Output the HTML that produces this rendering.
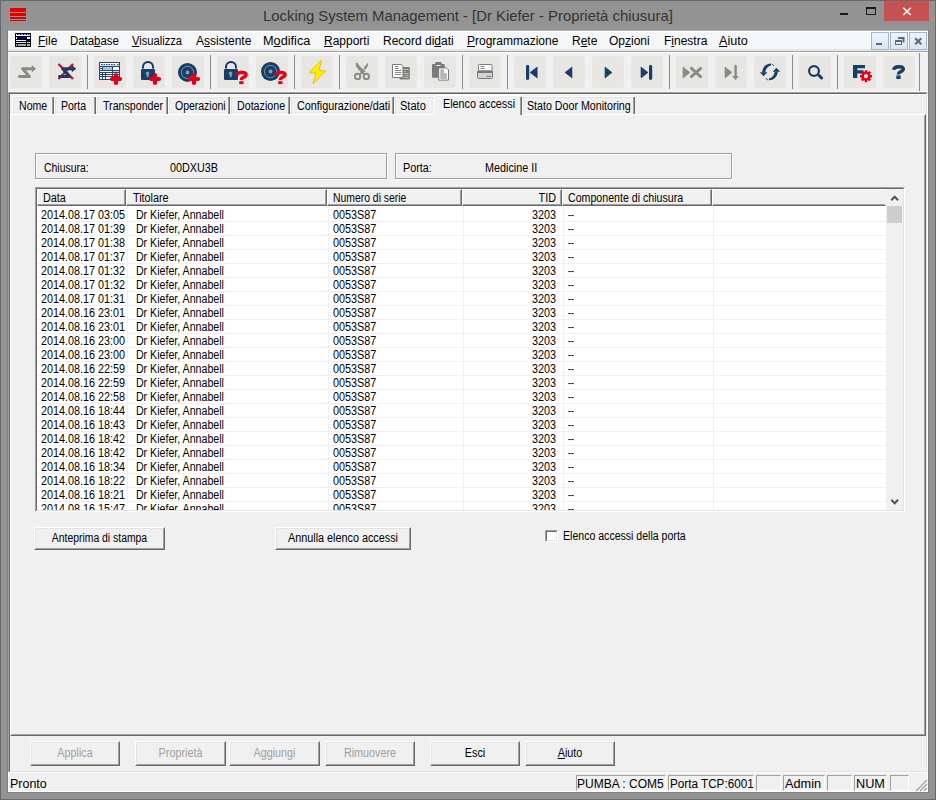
<!DOCTYPE html><html><head><meta charset="utf-8"><style>
*{box-sizing:border-box}
html,body{margin:0;padding:0;width:936px;height:800px;overflow:hidden;background:#939393;font-family:"Liberation Sans",sans-serif;}
.a{position:absolute}
.t{position:absolute;white-space:nowrap;font-size:12px;line-height:13px;color:#000;transform-origin:0 0;transform:scaleX(0.9)}
.btn{position:absolute;background:#f0f0f0;border-style:solid;border-width:1px;border-color:#fff #696969 #696969 #fff;}
.btn>i{position:absolute;left:0;top:0;right:0;bottom:0;border-style:solid;border-width:1px;border-color:#e3e3e3 #a0a0a0 #a0a0a0 #e3e3e3;}
.tb{position:absolute;top:56px;width:32px;height:32px;background:#e8e6e2;border-radius:3px}
.tb svg{position:absolute;left:0;top:0}
.sep{position:absolute;top:55px;width:1px;height:34px;background:#8a8a8a}
.menu{position:absolute;top:34px;font-size:12px;line-height:15px;color:#000;white-space:nowrap;transform-origin:0 0}
.menu u{text-decoration:underline;text-underline-offset:1px;text-decoration-thickness:1px}
.tab{position:absolute;top:96px;height:18px;background:#f0f0f0;border-left:1px solid #fff;border-top:1px solid #fff;box-shadow:inset 1px 1px 0 #e3e3e3}
.tab .rd{position:absolute;right:0;top:0;bottom:0;width:2px;border-left:1px solid #a0a0a0;border-right:1px solid #696969}
.grp{position:absolute;border:1px solid #a0a0a0;box-shadow:1px 1px 0 #fff, inset 1px 1px 0 #fff}
.row{position:absolute;left:0;width:849px;height:14px;}
.sp{position:absolute;top:775px;height:16px;border-style:solid;border-width:1px;border-color:#a0a0a0 #fff #fff #a0a0a0;}
.st{position:absolute;top:777px;font-size:12px;line-height:14px;color:#000;white-space:nowrap;transform-origin:0 0}
</style></head><body>
<div class="a" style="left:0;top:0;width:936px;height:800px;border:1px solid #6a6a6a"></div>
<div class="a" style="left:7px;top:30px;width:922px;height:763px;border:1px solid #818181"></div>
<div class="a" style="left:10px;top:8px;width:16px;height:4px;background:#e00000"></div>
<div class="a" style="left:10px;top:13px;width:16px;height:3px;background:#e00000"></div>
<div class="a" style="left:10px;top:17px;width:16px;height:2px;background:#e00000"></div>
<div class="a" style="left:10px;top:20px;width:16px;height:1px;background:#e00000"></div>
<div class="a" style="left:263px;top:7px;transform:scaleX(0.991);font-size:15px;line-height:18px;color:#333;white-space:nowrap;transform-origin:0 0;">Locking System Management - [Dr Kiefer - Proprietà chiusura]</div>
<div class="a" style="left:840px;top:13px;width:8px;height:2px;background:#1a1a1a"></div>
<div class="a" style="left:866px;top:7px;width:10px;height:8px;border:1px solid #1a1a1a;border-top-width:2px"></div>
<div class="a" style="left:884px;top:1px;width:45px;height:20px;background:#c75050"></div>
<svg class="a" style="left:884px;top:1px" width="45" height="20"><path d="M19.3 6.8 L26.7 14 M26.7 6.8 L19.3 14" stroke="#fff" stroke-width="1.6"/></svg>
<div class="a" style="left:8px;top:30px;width:920px;height:762px;background:#f0f0f0"></div>
<div class="a" style="left:8px;top:30px;width:920px;height:1px;background:#b8b8b8"></div>
<div class="a" style="left:8px;top:31px;width:920px;height:18px;background:#f5f6f7"></div>
<div class="a" style="left:8px;top:31px;width:920px;height:1px;background:#fff"></div>
<div class="a" style="left:8px;top:49px;width:920px;height:2px;background:#e6e6e6"></div>
<div class="a" style="left:8px;top:51px;width:920px;height:1px;background:#a0a0a0"></div>
<div class="a" style="left:8px;top:52px;width:920px;height:1px;background:#fff"></div>
<svg class="a" style="left:15px;top:33px" width="16" height="14"><rect x="0" y="0" width="16" height="14" rx="0.6" fill="#000"/><rect x="1" y="1" width="14" height="2" fill="#fff"/><rect x="2" y="1" width="1.6" height="1" fill="#0000e8"/><rect x="4.7" y="1" width="1.8" height="1" fill="#0000e8"/><rect x="7.6" y="1" width="1.8" height="1" fill="#0000e8"/><rect x="10.5" y="1" width="1.8" height="1" fill="#0000e8"/><rect x="13.2" y="1" width="1.2" height="1" fill="#0000e8"/><rect x="1" y="4" width="1" height="2" fill="#fff"/><rect x="3" y="4" width="8" height="2" fill="#00008a"/><rect x="12" y="4" width="3" height="2" fill="#f4f4f4"/><rect x="1" y="7" width="10" height="1" fill="#eee"/><rect x="12" y="7" width="3" height="1" fill="#00008a"/><rect x="1" y="9" width="10" height="1" fill="#e4e4e4"/><rect x="12" y="9" width="3" height="1" fill="#ddd"/><rect x="1" y="11" width="1" height="2" fill="#b8b8b8"/><rect x="3" y="11" width="8" height="2" fill="#a8a8a8"/><rect x="12" y="11" width="3" height="2" fill="#b0b0b0"/></svg>
<div class="menu" style="left:38px;top:34px;"><u>F</u>ile</div>
<div class="menu" style="left:70px;top:34px;transform:scaleX(0.95);">Data<u>b</u>ase</div>
<div class="menu" style="left:132px;top:34px;transform:scaleX(0.93);"><u>V</u>isualizza</div>
<div class="menu" style="left:196px;top:34px;">A<u>s</u>sistente</div>
<div class="menu" style="left:263px;top:34px;transform:scaleX(1.06);">M<u>o</u>difica</div>
<div class="menu" style="left:324px;top:34px;"><u>R</u>apporti</div>
<div class="menu" style="left:383px;top:34px;">Record di<u>d</u>ati</div>
<div class="menu" style="left:467px;top:34px;"><u>P</u>rogrammazione</div>
<div class="menu" style="left:572px;top:34px;">R<u>e</u>te</div>
<div class="menu" style="left:609px;top:34px;">Op<u>z</u>ioni</div>
<div class="menu" style="left:664px;top:34px;">F<u>i</u>nestra</div>
<div class="menu" style="left:719px;top:34px;transform:scaleX(1.05);"><u>A</u>iuto</div>
<div class="a" style="left:871px;top:32px;width:18px;height:18px;background:linear-gradient(#eef4fb,#dae6f3);border:1px solid #a3b5c8"></div>
<div class="a" style="left:890px;top:32px;width:18px;height:18px;background:linear-gradient(#eef4fb,#dae6f3);border:1px solid #a3b5c8"></div>
<div class="a" style="left:909px;top:32px;width:18px;height:18px;background:linear-gradient(#eef4fb,#dae6f3);border:1px solid #a3b5c8"></div>
<div class="a" style="left:876px;top:43px;width:6px;height:2px;background:#5b6b7b"></div>
<svg class="a" style="left:890px;top:32px" width="18" height="18"><path d="M8 6h5.5v4.5" fill="none" stroke="#5b6b7b" stroke-width="2"/><rect x="5.5" y="8.5" width="6" height="4" fill="none" stroke="#5b6b7b" stroke-width="1"/><path d="M5 9h7" stroke="#5b6b7b" stroke-width="2"/></svg>
<svg class="a" style="left:909px;top:32px" width="18" height="18"><path d="M6.2 6.2 L12.3 12.3 M12.3 6.2 L6.2 12.3" stroke="#5b6b7b" stroke-width="2"/></svg>
<div class="a" style="left:919px;top:53px;width:1px;height:39px;background:#8e8e8e"></div>
<div class="tb" style="left:10px"><svg width="32" height="32"><path d="M12.5 12.8H22.5M12.8 12.8L19.2 20.5M9.5 20.5H19.5" fill="none" stroke="#8a8a8a" stroke-width="2.9" stroke-linecap="round" stroke-linejoin="round"/><path d="M21.8 9L26.2 12.8L21.8 16.2Z" fill="#8a8a8a"/></svg></div>
<div class="tb" style="left:49px"><svg width="32" height="32"><path d="M9.5 8L24 23M24 8L9.5 23" stroke="#e8001c" stroke-width="2.3"/><path d="M13.5 12.8H23.5M13.8 12.8L20.2 20.5M10.5 20.5H20.5" fill="none" stroke="#183e68" stroke-width="2.9" stroke-linecap="round" stroke-linejoin="round"/><path d="M22.8 9L27.2 12.8L22.8 16.2Z" fill="#183e68"/></svg></div>
<div class="tb" style="left:94px"><svg width="32" height="32"><rect x="5" y="6" width="21" height="18" fill="#1e4a7a"/><rect x="6" y="7" width="19" height="2.8" fill="#fff"/><rect x="7" y="8" width="1.6" height="1" fill="#1e4a7a"/><rect x="9.5" y="8" width="1.6" height="1" fill="#1e4a7a"/><rect x="12" y="8" width="1.6" height="1" fill="#1e4a7a"/><rect x="14.5" y="8" width="1.6" height="1" fill="#1e4a7a"/><rect x="17" y="8" width="1.6" height="1" fill="#1e4a7a"/><rect x="19.5" y="8" width="1.6" height="1" fill="#1e4a7a"/><rect x="23" y="8" width="1.6" height="1" fill="#1e4a7a"/><rect x="6" y="11" width="2" height="1" fill="#fff"/><rect x="6" y="13" width="2" height="1" fill="#fff"/><rect x="9" y="11" width="9" height="3" fill="#b4c0d0"/><rect x="19" y="11" width="6" height="3" fill="#fff"/><rect x="6" y="15" width="12" height="1" fill="#fff"/><rect x="19" y="15" width="6" height="1" fill="#c8d0dc"/><rect x="6" y="17" width="2" height="1" fill="#fff"/><rect x="9" y="17" width="2" height="1" fill="#fff"/><rect x="12" y="17" width="6" height="1" fill="#fff"/><rect x="19" y="17" width="6" height="1" fill="#fff"/><rect x="6" y="19" width="2" height="1" fill="#fff"/><rect x="9" y="19" width="2" height="1" fill="#fff"/><rect x="12" y="19" width="6" height="1" fill="#fff"/><rect x="19" y="19" width="6" height="1" fill="#fff"/><rect x="6" y="21" width="2" height="2" fill="#fff"/><rect x="9" y="21" width="2" height="2" fill="#fff"/><rect x="12" y="21" width="6" height="2" fill="#fff"/><path d="M18 23H26M22 19V27" stroke="#e2001a" stroke-width="4.2" stroke-linecap="round"/></svg></div>
<div class="tb" style="left:133px"><svg width="32" height="32"><path d="M10 12.5V11A5 5 0 0 1 20 11V12.5" fill="none" stroke="#14365e" stroke-width="2"/><rect x="8" y="13" width="14" height="11" rx="1" fill="#183e68"/><circle cx="14.6" cy="17.3" r="1.7" fill="#8d9db3"/><rect x="13.7" y="17.5" width="1.9" height="3.6" fill="#8d9db3"/><path d="M18 23H26M22 19V27" stroke="#e2001a" stroke-width="4.2" stroke-linecap="round"/></svg></div>
<div class="tb" style="left:172px"><svg width="32" height="32"><circle cx="15.5" cy="16.4" r="9.5" fill="#183e68"/><circle cx="15.5" cy="16.4" r="6.1" fill="none" stroke="#8b9db5" stroke-width="0.9"/><circle cx="15.5" cy="16.4" r="1.9" fill="#8e9cb0"/><path d="M18 23H26M22 19V27" stroke="#e2001a" stroke-width="4.2" stroke-linecap="round"/></svg></div>
<div class="tb" style="left:217px"><svg width="32" height="32"><path d="M9 12.5V11A5 5 0 0 1 19 11V12.5" fill="none" stroke="#14365e" stroke-width="2"/><rect x="7" y="13" width="14" height="11" rx="1" fill="#183e68"/><circle cx="13.6" cy="17.3" r="1.7" fill="#8d9db3"/><rect x="12.7" y="17.5" width="1.9" height="3.6" fill="#8d9db3"/><path d="M19.9 19.6C20 17.2 22.3 16.5 25 16.5C27.8 16.5 29.1 17.3 29.1 18.8C29.1 20.5 27 21 25.7 21.7C24.6 22.3 24.3 23 24.3 24" fill="none" stroke="#e2001a" stroke-width="3.4"/><rect x="22.2" y="25.2" width="4.3" height="2.9" fill="#e2001a"/></svg></div>
<div class="tb" style="left:256px"><svg width="32" height="32"><circle cx="14.5" cy="15.5" r="9.5" fill="#183e68"/><circle cx="14.5" cy="15.5" r="6.1" fill="none" stroke="#8b9db5" stroke-width="0.9"/><circle cx="14.5" cy="15.5" r="1.9" fill="#8e9cb0"/><path d="M19.9 19.6C20 17.2 22.3 16.5 25 16.5C27.8 16.5 29.1 17.3 29.1 18.8C29.1 20.5 27 21 25.7 21.7C24.6 22.3 24.3 23 24.3 24" fill="none" stroke="#e2001a" stroke-width="3.4"/><rect x="22.2" y="25.2" width="4.3" height="2.9" fill="#e2001a"/></svg></div>
<div class="tb" style="left:301px"><svg width="32" height="32"><path d="M20.6 4L8.2 16.6L15 17.2L12 27.6L24.6 15.2L18 14.2Z" fill="#ffee00" stroke="#f3b400" stroke-width="0.9" stroke-linejoin="round"/></svg></div>
<div class="tb" style="left:346px"><svg width="32" height="32"><path d="M9.6 7.6L11.2 6.6L13.8 10.2L19.6 15.4L16 17.8L10 10.5Z" fill="#8a8a8a"/><path d="M21.8 6.8L22 9.5L19.8 13.2L17.4 13.8L18.2 11Z" fill="#8a8a8a"/><circle cx="11.6" cy="20.4" r="2.7" fill="none" stroke="#8a8a8a" stroke-width="1.9"/><circle cx="20.4" cy="20.4" r="2.7" fill="none" stroke="#8a8a8a" stroke-width="1.9"/><path d="M14 18L16 16.5L18 18" fill="none" stroke="#8a8a8a" stroke-width="1.8"/></svg></div>
<div class="tb" style="left:385px"><svg width="32" height="32"><rect x="14.5" y="11" width="10.3" height="12.6" rx="0.8" fill="#7c7c7c"/><path d="M18.5 13.5h5M18.5 15.5h2M18.5 17.5h5M18.5 19.5h1M20.5 19.5h3M18.5 21.5h5" stroke="#c4c4c4" stroke-width="0.9"/><path d="M7.5 8.5H16.2L18 10.3V21.5H7.5Z" fill="#fff" stroke="#7a7a7a" stroke-width="1"/><path d="M10 10.5h3.5M10 12.5h3.5M10 14.5h6.5M10 16.5h6.5M10 18.5h6.5" stroke="#7a7a7a" stroke-width="0.9"/></svg></div>
<div class="tb" style="left:424px"><svg width="32" height="32"><rect x="8" y="8" width="12.8" height="13.8" rx="1" fill="#7a7a7a"/><rect x="11.2" y="6" width="6.4" height="4" rx="1" fill="#7a7a7a"/><rect x="12.2" y="9" width="4.4" height="1" fill="#e8e8e8"/><path d="M14.7 11.9H22.5L24.5 13.9V24.1H14.7Z" fill="#fff" stroke="#7a7a7a" stroke-width="1"/><path d="M16.2 13.2H20.2V17.2H23V22.9H16.2Z" fill="#b8b8b8"/></svg></div>
<div class="tb" style="left:469px"><svg width="32" height="32"><rect x="9.5" y="8.5" width="13.5" height="6.5" rx="0.8" fill="#fff" stroke="#7a7a7a" stroke-width="1"/><path d="M11.5 10.5h4M11.5 12.5h4" stroke="#8a8a8a" stroke-width="1"/><rect x="8.5" y="15" width="15" height="7.5" rx="1" fill="#d4d4d4" stroke="#7a7a7a" stroke-width="1"/><rect x="8.5" y="15" width="15" height="2" fill="#7a7a7a"/><path d="M17.5 20.5h4.5" stroke="#7a7a7a" stroke-width="1"/></svg></div>
<div class="tb" style="left:514px"><svg width="32" height="32"><rect x="12" y="9" width="3.2" height="15" rx="1.4" fill="#183e68"/><path d="M16 16.5L23.2 11V22Z" fill="#183e68" stroke="#183e68" stroke-width="0.6" stroke-linejoin="round"/></svg></div>
<div class="tb" style="left:553px"><svg width="32" height="32"><path d="M12 16.5L19 11V22Z" fill="#183e68" stroke="#183e68" stroke-width="0.6" stroke-linejoin="round"/></svg></div>
<div class="tb" style="left:592px"><svg width="32" height="32"><path d="M20 16.5L13 11V22Z" fill="#183e68" stroke="#183e68" stroke-width="0.6" stroke-linejoin="round"/></svg></div>
<div class="tb" style="left:631px"><svg width="32" height="32"><path d="M17 16.5L10 11V22Z" fill="#183e68" stroke="#183e68" stroke-width="0.6" stroke-linejoin="round"/><rect x="18" y="9" width="3.2" height="15" rx="1.4" fill="#183e68"/></svg></div>
<div class="tb" style="left:676px"><svg width="32" height="32"><path d="M14 16.5L7 11V22Z" fill="#8a8a8a" stroke="#8a8a8a" stroke-width="0.6" stroke-linejoin="round"/><path d="M15.4 12.4L24.6 20.6M24.6 12.4L15.4 20.6" stroke="#8a8a8a" stroke-width="2.9" stroke-linecap="round"/></svg></div>
<div class="tb" style="left:715px"><svg width="32" height="32"><path d="M17 16.5L10 11V22Z" fill="#8a8a8a" stroke="#8a8a8a" stroke-width="0.6" stroke-linejoin="round"/><path d="M20.6 10V21" stroke="#8a8a8a" stroke-width="2.4" stroke-linecap="round"/><path d="M17 20L24 20L20.6 24Z" fill="#8a8a8a"/></svg></div>
<div class="tb" style="left:754px"><svg width="32" height="32"><path d="M17 7.6C12.5 7.8 8.6 10.5 8.2 16.4L11.2 16.4C11.7 12.4 14 10 17 9.4Z" fill="#183e68"/><path d="M5.8 16.2H13.4L9.6 20.2Z" fill="#183e68"/><path d="M15 24.4C19.5 24.2 23.4 21.5 23.8 15.6L20.8 15.6C20.3 19.6 18 22 15 22.6Z" fill="#183e68"/><path d="M26.2 15.8H18.6L22.4 11.8Z" fill="#183e68"/><circle cx="18.3" cy="8.3" r="0.6" fill="#183e68"/><circle cx="19.7" cy="9.3" r="0.6" fill="#183e68"/><circle cx="13.7" cy="23.7" r="0.6" fill="#183e68"/><circle cx="12.3" cy="22.7" r="0.6" fill="#183e68"/></svg></div>
<div class="tb" style="left:799px"><svg width="32" height="32"><circle cx="15" cy="15" r="4.9" fill="none" stroke="#183e68" stroke-width="2.2"/><path d="M20.2 19.6L22.6 22" stroke="#183e68" stroke-width="3" stroke-linecap="round"/></svg></div>
<div class="tb" style="left:844px"><svg width="32" height="32"><path d="M9 9H21V12.2H13.3V14.2H19.5V17.5H13.3V22H9Z" fill="#183e68"/><path d="M20.57 16.15 L20.79 14.22 L23.21 14.22 L23.43 16.15 L23.85 16.32 L25.37 15.12 L27.08 16.83 L25.88 18.35 L26.05 18.77 L27.98 18.99 L27.98 21.41 L26.05 21.63 L25.88 22.05 L27.08 23.57 L25.37 25.28 L23.85 24.08 L23.43 24.25 L23.21 26.18 L20.79 26.18 L20.57 24.25 L20.15 24.08 L18.63 25.28 L16.92 23.57 L18.12 22.05 L17.95 21.63 L16.02 21.41 L16.02 18.99 L17.95 18.77 L18.12 18.35 L16.92 16.83 L18.63 15.12 L20.15 16.32Z M24.1 20.2 A2.1 2.1 0 1 0 19.9 20.2 A2.1 2.1 0 1 0 24.1 20.2Z" fill="#e2001a" fill-rule="evenodd"/></svg></div>
<div class="tb" style="left:883px"><svg width="32" height="32"><path d="M10.8 13.8C11 11.2 13.5 10.7 15.8 10.7C18.8 10.7 20.3 11.6 20.3 12.9C20.3 14.8 18 15.4 16.8 16.1C15.8 16.7 15.5 17.4 15.5 18.4" fill="none" stroke="#183e68" stroke-width="3.4"/><rect x="13.3" y="19.4" width="4.3" height="3.6" fill="#183e68"/></svg></div>
<div class="sep" style="left:87px"></div>
<div class="sep" style="left:210px"></div>
<div class="sep" style="left:294px"></div>
<div class="sep" style="left:339px"></div>
<div class="sep" style="left:462px"></div>
<div class="sep" style="left:507px"></div>
<div class="sep" style="left:669px"></div>
<div class="sep" style="left:792px"></div>
<div class="sep" style="left:837px"></div>
<div class="a" style="left:8px;top:92px;width:920px;height:681px;border-style:solid;border-width:1px;border-color:#a0a0a0 #fff #fff #a0a0a0"></div>
<div class="a" style="left:9px;top:93px;width:918px;height:679px;border-style:solid;border-width:1px;border-color:#696969 #e3e3e3 #e3e3e3 #696969"></div>
<div class="a" style="left:10px;top:94px;width:916px;height:677px;background:#f0f0f0"></div>
<div class="a" style="left:8px;top:91px;width:920px;height:1px;background:#fafafa"></div>
<div class="a" style="left:10px;top:94px;width:916px;height:1px;background:#f8f8f8"></div>
<div class="a" style="left:10px;top:114px;width:916px;height:622px;border-style:solid;border-width:1px;border-color:#fff #696969 #696969 #fff"></div>
<div class="a" style="left:11px;top:115px;width:914px;height:620px;border-style:solid;border-width:1px;border-color:#f0f0f0 #a0a0a0 #a0a0a0 #f0f0f0"></div>
<div class="tab" style="left:12px;width:42px"><div class="rd"></div></div>
<div class="tab" style="left:54px;width:42px"><div class="rd"></div></div>
<div class="tab" style="left:96px;width:72px"><div class="rd"></div></div>
<div class="tab" style="left:168px;width:62px"><div class="rd"></div></div>
<div class="tab" style="left:230px;width:60px"><div class="rd"></div></div>
<div class="tab" style="left:290px;width:104px"><div class="rd"></div></div>
<div class="tab" style="left:394px;width:43px"></div>
<div class="tab" style="left:522px;width:113px"><div class="rd"></div></div>
<div class="a" style="left:434px;top:95px;width:88px;height:20px;background:#f0f0f0;border-left:1px solid #fff;border-top:1px solid #fff"><div style="position:absolute;right:0;top:1px;bottom:0;width:2px;border-left:1px solid #a0a0a0;border-right:1px solid #696969"></div></div>
<div class="t" style="left:19px;top:100px;transform:scaleX(0.88)">Nome</div>
<div class="t" style="left:61px;top:100px;transform:scaleX(0.875)">Porta</div>
<div class="t" style="left:103px;top:100px;transform:scaleX(0.887)">Transponder</div>
<div class="t" style="left:174.75px;top:100px;transform:scaleX(0.873)">Operazioni</div>
<div class="t" style="left:236.5px;top:100px;transform:scaleX(0.89)">Dotazione</div>
<div class="t" style="left:296.5px;top:100px;transform:scaleX(0.9)">Configurazione/dati</div>
<div class="t" style="left:400.3px;top:100px;transform:scaleX(0.92)">Stato</div>
<div class="t" style="left:526.7px;top:100px;transform:scaleX(0.888)">Stato Door Monitoring</div>
<div class="t" style="left:442.8px;top:98px;transform:scaleX(0.9)">Elenco accessi</div>
<div class="grp" style="left:35px;top:153px;width:352px;height:26px"></div>
<div class="t" style="left:43.8px;top:162px;transform:scaleX(0.87)">Chiusura:</div>
<div class="t" style="left:170.4px;top:162px">00DXU3B</div>
<div class="grp" style="left:395px;top:153px;width:337px;height:26px"></div>
<div class="t" style="left:402.7px;top:162px">Porta:</div>
<div class="t" style="left:484.7px;top:162px">Medicine II</div>
<div class="a" style="left:35px;top:187px;width:870px;height:325px;border-style:solid;border-width:1px;border-color:#a0a0a0 #fff #fff #a0a0a0;overflow:hidden">
<div class="a" style="left:0;top:0;width:868px;height:323px;border-style:solid;border-width:1px;border-color:#696969 #e3e3e3 #e3e3e3 #696969;overflow:hidden;background:#fff">
<div class="a" style="left:0px;top:0;width:89px;height:17px;background:#f0f0f0;border-style:solid;border-width:1px;border-color:#fff #696969 #696969 #fff"><i style="position:absolute;left:0;top:0;right:0;bottom:0;border-right:1px solid #a0a0a0;border-bottom:1px solid #a0a0a0"></i></div>
<div class="t" style="left:6px;top:3px;transform:scaleX(0.9)">Data</div>
<div class="a" style="left:89px;top:0;width:201px;height:17px;background:#f0f0f0;border-style:solid;border-width:1px;border-color:#fff #696969 #696969 #fff"><i style="position:absolute;left:0;top:0;right:0;bottom:0;border-right:1px solid #a0a0a0;border-bottom:1px solid #a0a0a0"></i></div>
<div class="t" style="left:96px;top:3px;transform:scaleX(0.9)">Titolare</div>
<div class="a" style="left:290px;top:0;width:135px;height:17px;background:#f0f0f0;border-style:solid;border-width:1px;border-color:#fff #696969 #696969 #fff"><i style="position:absolute;left:0;top:0;right:0;bottom:0;border-right:1px solid #a0a0a0;border-bottom:1px solid #a0a0a0"></i></div>
<div class="t" style="left:296px;top:3px;transform:scaleX(0.866)">Numero di serie</div>
<div class="a" style="left:425px;top:0;width:100px;height:17px;background:#f0f0f0;border-style:solid;border-width:1px;border-color:#fff #696969 #696969 #fff"><i style="position:absolute;left:0;top:0;right:0;bottom:0;border-right:1px solid #a0a0a0;border-bottom:1px solid #a0a0a0"></i></div>
<div class="t" style="left:425px;width:104.44px;text-align:right;top:3px">TID</div>
<div class="a" style="left:525px;top:0;width:150px;height:17px;background:#f0f0f0;border-style:solid;border-width:1px;border-color:#fff #696969 #696969 #fff"><i style="position:absolute;left:0;top:0;right:0;bottom:0;border-right:1px solid #a0a0a0;border-bottom:1px solid #a0a0a0"></i></div>
<div class="t" style="left:531px;top:3px;transform:scaleX(0.885)">Componente di chiusura</div>
<div class="a" style="left:675px;top:0;width:174px;height:17px;background:#f0f0f0;border-style:solid;border-width:1px;border-color:#fff #f0f0f0 #696969 #fff"><i style="position:absolute;left:0;top:0;right:0;bottom:0;border-right:1px solid #f0f0f0;border-bottom:1px solid #a0a0a0"></i></div>
<div class="row" style="top:19px;border-bottom:1px solid #f0f0f0"></div>
<div class="t" style="left:4px;top:20px">2014.08.17 03:05</div>
<div class="t" style="left:96px;top:20px;transform:scaleX(0.885)">&nbsp;Dr Kiefer, Annabell</div>
<div class="t" style="left:296px;top:20px">0053S87</div>
<div class="t" style="left:425px;width:104.44px;text-align:right;top:20px">3203</div>
<div class="t" style="left:531px;top:20px;transform:scaleX(0.72)">--</div>
<div class="row" style="top:33px;border-bottom:1px solid #f0f0f0"></div>
<div class="t" style="left:4px;top:34px">2014.08.17 01:39</div>
<div class="t" style="left:96px;top:34px;transform:scaleX(0.885)">&nbsp;Dr Kiefer, Annabell</div>
<div class="t" style="left:296px;top:34px">0053S87</div>
<div class="t" style="left:425px;width:104.44px;text-align:right;top:34px">3203</div>
<div class="t" style="left:531px;top:34px;transform:scaleX(0.72)">--</div>
<div class="row" style="top:47px;border-bottom:1px solid #f0f0f0"></div>
<div class="t" style="left:4px;top:48px">2014.08.17 01:38</div>
<div class="t" style="left:96px;top:48px;transform:scaleX(0.885)">&nbsp;Dr Kiefer, Annabell</div>
<div class="t" style="left:296px;top:48px">0053S87</div>
<div class="t" style="left:425px;width:104.44px;text-align:right;top:48px">3203</div>
<div class="t" style="left:531px;top:48px;transform:scaleX(0.72)">--</div>
<div class="row" style="top:61px;border-bottom:1px solid #f0f0f0"></div>
<div class="t" style="left:4px;top:62px">2014.08.17 01:37</div>
<div class="t" style="left:96px;top:62px;transform:scaleX(0.885)">&nbsp;Dr Kiefer, Annabell</div>
<div class="t" style="left:296px;top:62px">0053S87</div>
<div class="t" style="left:425px;width:104.44px;text-align:right;top:62px">3203</div>
<div class="t" style="left:531px;top:62px;transform:scaleX(0.72)">--</div>
<div class="row" style="top:75px;border-bottom:1px solid #f0f0f0"></div>
<div class="t" style="left:4px;top:76px">2014.08.17 01:32</div>
<div class="t" style="left:96px;top:76px;transform:scaleX(0.885)">&nbsp;Dr Kiefer, Annabell</div>
<div class="t" style="left:296px;top:76px">0053S87</div>
<div class="t" style="left:425px;width:104.44px;text-align:right;top:76px">3203</div>
<div class="t" style="left:531px;top:76px;transform:scaleX(0.72)">--</div>
<div class="row" style="top:89px;border-bottom:1px solid #f0f0f0"></div>
<div class="t" style="left:4px;top:90px">2014.08.17 01:32</div>
<div class="t" style="left:96px;top:90px;transform:scaleX(0.885)">&nbsp;Dr Kiefer, Annabell</div>
<div class="t" style="left:296px;top:90px">0053S87</div>
<div class="t" style="left:425px;width:104.44px;text-align:right;top:90px">3203</div>
<div class="t" style="left:531px;top:90px;transform:scaleX(0.72)">--</div>
<div class="row" style="top:103px;border-bottom:1px solid #f0f0f0"></div>
<div class="t" style="left:4px;top:104px">2014.08.17 01:31</div>
<div class="t" style="left:96px;top:104px;transform:scaleX(0.885)">&nbsp;Dr Kiefer, Annabell</div>
<div class="t" style="left:296px;top:104px">0053S87</div>
<div class="t" style="left:425px;width:104.44px;text-align:right;top:104px">3203</div>
<div class="t" style="left:531px;top:104px;transform:scaleX(0.72)">--</div>
<div class="row" style="top:117px;border-bottom:1px solid #f0f0f0"></div>
<div class="t" style="left:4px;top:118px">2014.08.16 23:01</div>
<div class="t" style="left:96px;top:118px;transform:scaleX(0.885)">&nbsp;Dr Kiefer, Annabell</div>
<div class="t" style="left:296px;top:118px">0053S87</div>
<div class="t" style="left:425px;width:104.44px;text-align:right;top:118px">3203</div>
<div class="t" style="left:531px;top:118px;transform:scaleX(0.72)">--</div>
<div class="row" style="top:131px;border-bottom:1px solid #f0f0f0"></div>
<div class="t" style="left:4px;top:132px">2014.08.16 23:01</div>
<div class="t" style="left:96px;top:132px;transform:scaleX(0.885)">&nbsp;Dr Kiefer, Annabell</div>
<div class="t" style="left:296px;top:132px">0053S87</div>
<div class="t" style="left:425px;width:104.44px;text-align:right;top:132px">3203</div>
<div class="t" style="left:531px;top:132px;transform:scaleX(0.72)">--</div>
<div class="row" style="top:145px;border-bottom:1px solid #f0f0f0"></div>
<div class="t" style="left:4px;top:146px">2014.08.16 23:00</div>
<div class="t" style="left:96px;top:146px;transform:scaleX(0.885)">&nbsp;Dr Kiefer, Annabell</div>
<div class="t" style="left:296px;top:146px">0053S87</div>
<div class="t" style="left:425px;width:104.44px;text-align:right;top:146px">3203</div>
<div class="t" style="left:531px;top:146px;transform:scaleX(0.72)">--</div>
<div class="row" style="top:159px;border-bottom:1px solid #f0f0f0"></div>
<div class="t" style="left:4px;top:160px">2014.08.16 23:00</div>
<div class="t" style="left:96px;top:160px;transform:scaleX(0.885)">&nbsp;Dr Kiefer, Annabell</div>
<div class="t" style="left:296px;top:160px">0053S87</div>
<div class="t" style="left:425px;width:104.44px;text-align:right;top:160px">3203</div>
<div class="t" style="left:531px;top:160px;transform:scaleX(0.72)">--</div>
<div class="row" style="top:173px;border-bottom:1px solid #f0f0f0"></div>
<div class="t" style="left:4px;top:174px">2014.08.16 22:59</div>
<div class="t" style="left:96px;top:174px;transform:scaleX(0.885)">&nbsp;Dr Kiefer, Annabell</div>
<div class="t" style="left:296px;top:174px">0053S87</div>
<div class="t" style="left:425px;width:104.44px;text-align:right;top:174px">3203</div>
<div class="t" style="left:531px;top:174px;transform:scaleX(0.72)">--</div>
<div class="row" style="top:187px;border-bottom:1px solid #f0f0f0"></div>
<div class="t" style="left:4px;top:188px">2014.08.16 22:59</div>
<div class="t" style="left:96px;top:188px;transform:scaleX(0.885)">&nbsp;Dr Kiefer, Annabell</div>
<div class="t" style="left:296px;top:188px">0053S87</div>
<div class="t" style="left:425px;width:104.44px;text-align:right;top:188px">3203</div>
<div class="t" style="left:531px;top:188px;transform:scaleX(0.72)">--</div>
<div class="row" style="top:201px;border-bottom:1px solid #f0f0f0"></div>
<div class="t" style="left:4px;top:202px">2014.08.16 22:58</div>
<div class="t" style="left:96px;top:202px;transform:scaleX(0.885)">&nbsp;Dr Kiefer, Annabell</div>
<div class="t" style="left:296px;top:202px">0053S87</div>
<div class="t" style="left:425px;width:104.44px;text-align:right;top:202px">3203</div>
<div class="t" style="left:531px;top:202px;transform:scaleX(0.72)">--</div>
<div class="row" style="top:215px;border-bottom:1px solid #f0f0f0"></div>
<div class="t" style="left:4px;top:216px">2014.08.16 18:44</div>
<div class="t" style="left:96px;top:216px;transform:scaleX(0.885)">&nbsp;Dr Kiefer, Annabell</div>
<div class="t" style="left:296px;top:216px">0053S87</div>
<div class="t" style="left:425px;width:104.44px;text-align:right;top:216px">3203</div>
<div class="t" style="left:531px;top:216px;transform:scaleX(0.72)">--</div>
<div class="row" style="top:229px;border-bottom:1px solid #f0f0f0"></div>
<div class="t" style="left:4px;top:230px">2014.08.16 18:43</div>
<div class="t" style="left:96px;top:230px;transform:scaleX(0.885)">&nbsp;Dr Kiefer, Annabell</div>
<div class="t" style="left:296px;top:230px">0053S87</div>
<div class="t" style="left:425px;width:104.44px;text-align:right;top:230px">3203</div>
<div class="t" style="left:531px;top:230px;transform:scaleX(0.72)">--</div>
<div class="row" style="top:243px;border-bottom:1px solid #f0f0f0"></div>
<div class="t" style="left:4px;top:244px">2014.08.16 18:42</div>
<div class="t" style="left:96px;top:244px;transform:scaleX(0.885)">&nbsp;Dr Kiefer, Annabell</div>
<div class="t" style="left:296px;top:244px">0053S87</div>
<div class="t" style="left:425px;width:104.44px;text-align:right;top:244px">3203</div>
<div class="t" style="left:531px;top:244px;transform:scaleX(0.72)">--</div>
<div class="row" style="top:257px;border-bottom:1px solid #f0f0f0"></div>
<div class="t" style="left:4px;top:258px">2014.08.16 18:42</div>
<div class="t" style="left:96px;top:258px;transform:scaleX(0.885)">&nbsp;Dr Kiefer, Annabell</div>
<div class="t" style="left:296px;top:258px">0053S87</div>
<div class="t" style="left:425px;width:104.44px;text-align:right;top:258px">3203</div>
<div class="t" style="left:531px;top:258px;transform:scaleX(0.72)">--</div>
<div class="row" style="top:271px;border-bottom:1px solid #f0f0f0"></div>
<div class="t" style="left:4px;top:272px">2014.08.16 18:34</div>
<div class="t" style="left:96px;top:272px;transform:scaleX(0.885)">&nbsp;Dr Kiefer, Annabell</div>
<div class="t" style="left:296px;top:272px">0053S87</div>
<div class="t" style="left:425px;width:104.44px;text-align:right;top:272px">3203</div>
<div class="t" style="left:531px;top:272px;transform:scaleX(0.72)">--</div>
<div class="row" style="top:285px;border-bottom:1px solid #f0f0f0"></div>
<div class="t" style="left:4px;top:286px">2014.08.16 18:22</div>
<div class="t" style="left:96px;top:286px;transform:scaleX(0.885)">&nbsp;Dr Kiefer, Annabell</div>
<div class="t" style="left:296px;top:286px">0053S87</div>
<div class="t" style="left:425px;width:104.44px;text-align:right;top:286px">3203</div>
<div class="t" style="left:531px;top:286px;transform:scaleX(0.72)">--</div>
<div class="row" style="top:299px;border-bottom:1px solid #f0f0f0"></div>
<div class="t" style="left:4px;top:300px">2014.08.16 18:21</div>
<div class="t" style="left:96px;top:300px;transform:scaleX(0.885)">&nbsp;Dr Kiefer, Annabell</div>
<div class="t" style="left:296px;top:300px">0053S87</div>
<div class="t" style="left:425px;width:104.44px;text-align:right;top:300px">3203</div>
<div class="t" style="left:531px;top:300px;transform:scaleX(0.72)">--</div>
<div class="row" style="top:313px;border-bottom:1px solid #f0f0f0"></div>
<div class="t" style="left:4px;top:314px">2014.08.16 15:47</div>
<div class="t" style="left:96px;top:314px;transform:scaleX(0.885)">&nbsp;Dr Kiefer, Annabell</div>
<div class="t" style="left:296px;top:314px">0053S87</div>
<div class="t" style="left:425px;width:104.44px;text-align:right;top:314px">3203</div>
<div class="t" style="left:531px;top:314px;transform:scaleX(0.72)">--</div>
<div class="a" style="left:90px;top:17px;width:1px;height:310px;background:#f0f0f0"></div>
<div class="a" style="left:291px;top:17px;width:1px;height:310px;background:#f0f0f0"></div>
<div class="a" style="left:426px;top:17px;width:1px;height:310px;background:#f0f0f0"></div>
<div class="a" style="left:526px;top:17px;width:1px;height:310px;background:#f0f0f0"></div>
<div class="a" style="left:676px;top:17px;width:1px;height:310px;background:#f0f0f0"></div>
<div class="a" style="left:849px;top:0;width:17px;height:321px;background:#f0f0f0"></div>
<svg class="a" style="left:849px;top:0" width="17" height="17"><path d="M5.3 11.2 L8.7 7.8 L12.1 11.2" fill="none" stroke="#555" stroke-width="2.1"/></svg>
<div class="a" style="left:850px;top:17px;width:15px;height:17px;background:#cdcdcd"></div>
<svg class="a" style="left:849px;top:304px" width="17" height="17"><path d="M5.3 6.8 L8.7 10.2 L12.1 6.8" fill="none" stroke="#555" stroke-width="2.1"/></svg>
</div></div>
<div class="btn" style="left:34px;top:527px;width:131px;height:23px"><i></i></div>
<div class="t" style="left:34px;width:151.27px;text-align:center;top:532px;color:#000;transform:scaleX(0.866)">Anteprima di stampa</div>
<div class="btn" style="left:275px;top:527px;width:136px;height:23px"><i></i></div>
<div class="t" style="left:275px;width:151.11px;text-align:center;top:532px;color:#000;transform:scaleX(0.9)">Annulla elenco accessi</div>
<div class="a" style="left:545px;top:530px;width:13px;height:12px;background:#fff;border-style:solid;border-width:1px;border-color:#a0a0a0 #fff #fff #a0a0a0"><i style="position:absolute;left:0;top:0;right:0;bottom:0;border-style:solid;border-width:1px;border-color:#696969 #e3e3e3 #e3e3e3 #696969"></i></div>
<div class="t" style="left:563px;top:530px;transform:scaleX(0.88)">Elenco accessi della porta</div>
<div class="btn" style="left:30px;top:741px;width:90px;height:25px"><i></i></div>
<div class="t" style="left:30px;width:100.00px;text-align:center;top:747px;color:#a0a0a0;transform:scaleX(0.9)">Applica</div>
<div class="btn" style="left:135px;top:741px;width:91px;height:25px"><i></i></div>
<div class="t" style="left:135px;width:101.11px;text-align:center;top:747px;color:#a0a0a0;transform:scaleX(0.9)">Proprietà</div>
<div class="btn" style="left:229px;top:741px;width:91px;height:25px"><i></i></div>
<div class="t" style="left:229px;width:101.11px;text-align:center;top:747px;color:#a0a0a0;transform:scaleX(0.9)">Aggiungi</div>
<div class="btn" style="left:325px;top:741px;width:90px;height:25px"><i></i></div>
<div class="t" style="left:325px;width:100.00px;text-align:center;top:747px;color:#a0a0a0;transform:scaleX(0.9)">Rimuovere</div>
<div class="btn" style="left:430px;top:741px;width:90px;height:25px"><i></i></div>
<div class="t" style="left:430px;width:100.00px;text-align:center;top:747px;color:#000;transform:scaleX(0.9)">Esci</div>
<div class="btn" style="left:525px;top:741px;width:90px;height:25px"><i></i></div>
<div class="t" style="left:525px;width:100.00px;text-align:center;top:747px;color:#000;transform:scaleX(0.9)"><u style="text-decoration:underline">A</u>iuto</div>
<div class="a" style="left:8px;top:772px;width:920px;height:20px;background:#f0f0f0;border:1px solid #fff"></div>
<div class="st" style="left:10px;transform:scaleX(1.04)">Pronto</div>
<div class="sp" style="left:576px;width:90px"></div>
<div class="st" style="left:577px;transform:scaleX(1)">PUMBA : COM5</div>
<div class="sp" style="left:668px;width:86px"></div>
<div class="st" style="left:670px;transform:scaleX(0.975)">Porta TCP:6001</div>
<div class="sp" style="left:756px;width:25px"></div>
<div class="sp" style="left:783px;width:42px"></div>
<div class="st" style="left:785px;transform:scaleX(1.06)">Admin</div>
<div class="sp" style="left:827px;width:25px"></div>
<div class="sp" style="left:854px;width:33px"></div>
<div class="st" style="left:856px;transform:scaleX(1.06)">NUM</div>
<div class="sp" style="left:890px;width:19px"></div>
<svg class="a" style="left:910px;top:776px" width="18" height="16"><path d="M6 15 L17 4 M10 15 L17 8 M14 15 L17 12" stroke="#a0a0a0" stroke-width="1.3"/></svg>
</body></html>
